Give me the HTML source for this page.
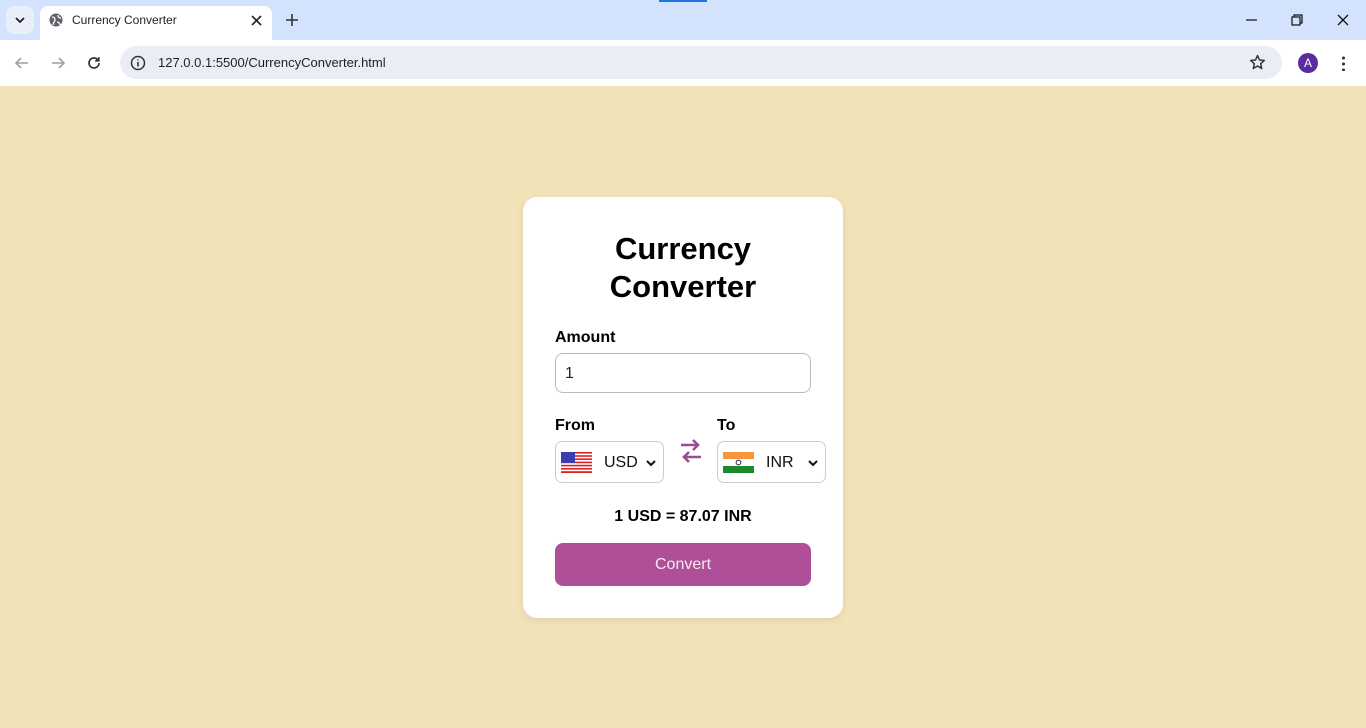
<!DOCTYPE html>
<html><head><meta charset="utf-8"><style>
*{box-sizing:border-box;margin:0;padding:0}
body{width:1366px;height:728px;overflow:hidden;font-family:"Liberation Sans",Arial,sans-serif;background:#f1e2b8;position:relative}
.top{position:absolute;left:0;top:0;width:1366px;height:40px;background:#d3e3fd}
.tab{position:absolute;left:40px;top:6px;width:232px;height:34px;background:#fff;border-radius:8px 8px 0 0}
.tab span{position:absolute;left:32px;top:7px;font-size:12px;color:#1f1f1f}
.bar{position:absolute;left:0;top:40px;width:1366px;height:46px;background:#fff}
.url{position:absolute;left:120px;top:6px;width:1162px;height:33px;background:#e9eef6;border-radius:17px}
.url span{position:absolute;left:38px;top:9px;font-size:13px;color:#1f1f1f}
.card{position:absolute;left:523px;top:197px;width:320px;height:421px;background:#fff;border-radius:14px;box-shadow:0 2px 8px rgba(0,0,0,.08)}
h1{position:absolute;left:0;top:33px;width:320px;text-align:center;font-size:31px;line-height:38px;font-weight:bold;color:#000}
.lbl{position:absolute;font-size:16px;font-weight:bold;color:#000}
.inp{position:absolute;left:32px;top:156px;width:256px;height:40px;border:1px solid #bbb;border-radius:8px;font-size:16px;padding:11px 9px;color:#222}
.sel{position:absolute;top:244px;width:109px;height:42px;border:1px solid #ccc;border-radius:7px}
.sel .c{position:absolute;top:12px;font-size:16px;color:#111}
.res{position:absolute;left:0;top:311px;width:320px;text-align:center;font-size:16px;font-weight:bold;color:#000}
.btn{position:absolute;left:32px;top:346px;width:256px;height:43px;background:#af4f97;border-radius:8px;color:#f6eaf3;font-size:16px;text-align:center;line-height:43px}
</style></head><body>
<div class="top">
<div style="position:absolute;left:6px;top:6px;width:28px;height:28px;background:#e9eef8;border-radius:8px"></div>
<svg style="position:absolute;left:14px;top:16px" width="12" height="8"><path d="M2 2l4 4 4-4" stroke="#1f1f1f" stroke-width="1.8" fill="none"/></svg>
<div class="tab"><svg style="position:absolute;left:9px;top:7px" width="14" height="14"><circle cx="7" cy="7" r="6.5" fill="#5f6368"/><path d="M3 4c2 0 3 1 3 3s-2 2-2 5M9 2c0 2 1 3 3 3M8 9c1 0 3 1 3 3" stroke="#fff" stroke-width="1.3" fill="none"/></svg><span>Currency Converter</span>
<svg style="position:absolute;left:211px;top:9px" width="11" height="11"><path d="M1 1l9 9M10 1l-9 9" stroke="#1f1f1f" stroke-width="1.6"/></svg></div>
<svg style="position:absolute;left:285px;top:13px" width="14" height="14"><path d="M7 1v12M1 7h12" stroke="#333" stroke-width="1.6"/></svg>
<div style="position:absolute;left:659px;top:0;width:48px;height:2px;background:#1a73e8"></div>
<svg style="position:absolute;left:1246px;top:19px" width="11" height="2"><path d="M0 1h11" stroke="#111" stroke-width="1.2"/></svg>
<svg style="position:absolute;left:1291px;top:14px" width="12" height="12"><rect x="1" y="3" width="8" height="8" fill="none" stroke="#111" stroke-width="1.2"/><path d="M3 3V1h8v8H9" fill="none" stroke="#111" stroke-width="1.2"/></svg>
<svg style="position:absolute;left:1337px;top:14px" width="12" height="12"><path d="M1 1l10 10M11 1L1 11" stroke="#111" stroke-width="1.3"/></svg>
</div>
<div class="bar">
<svg style="position:absolute;left:14px;top:15px" width="16" height="16"><path d="M14 8H2M7 3L2 8l5 5" stroke="#9aa0a6" stroke-width="1.6" fill="none"/></svg>
<svg style="position:absolute;left:50px;top:15px" width="16" height="16"><path d="M2 8h12M9 3l5 5-5 5" stroke="#9aa0a6" stroke-width="1.6" fill="none"/></svg>
<svg style="position:absolute;left:86px;top:15px" width="16" height="16"><path d="M13 8a5 5 0 1 1-1.5-3.6" stroke="#333" stroke-width="1.7" fill="none"/><path d="M13 2v4H9" fill="#333" stroke="#333" stroke-width="1.2"/></svg>
<div class="url"><svg style="position:absolute;left:10px;top:9px" width="16" height="16"><circle cx="8" cy="8" r="6.5" fill="none" stroke="#333" stroke-width="1.5"/><path d="M8 7v4.5M8 4.5v1" stroke="#333" stroke-width="1.6"/></svg><span>127.0.0.1:5500/CurrencyConverter.html</span>
<svg style="position:absolute;left:1129px;top:8px" width="17" height="17"><path d="M8.5 1.5l2 4.5 4.8.5-3.6 3.2 1 4.8-4.2-2.5-4.2 2.5 1-4.8L1.7 6.5l4.8-.5z" fill="none" stroke="#333" stroke-width="1.5" stroke-linejoin="round"/></svg></div>
<div style="position:absolute;left:1298px;top:13px;width:20px;height:20px;border-radius:50%;background:#5a2ca0;color:#fff;font-size:12px;text-align:center;line-height:20px">A</div>
<div style="position:absolute;left:1342px;top:15px;width:3px;height:16px;background:radial-gradient(circle,#333 1.4px,transparent 1.6px) 0 0/3px 6px"></div>
</div>
<div class="card">
<h1>Currency<br>Converter</h1>
<div class="lbl" style="left:32px;top:132px">Amount</div>
<div class="inp">1</div>
<div class="lbl" style="left:32px;top:220px">From</div>
<div class="lbl" style="left:194px;top:220px">To</div>
<div class="sel" style="left:32px">
<svg style="position:absolute;left:5px;top:10px" width="31" height="21"><rect width="31" height="21" fill="#fff"/><g fill="#d22">
<rect y="0" width="31" height="1.6"/><rect y="3.2" width="31" height="1.6"/><rect y="6.4" width="31" height="1.6"/><rect y="9.6" width="31" height="1.6"/><rect y="12.8" width="31" height="1.6"/><rect y="16" width="31" height="1.6"/><rect y="19.2" width="31" height="1.8"/></g><rect width="14" height="11" fill="#3c3bb0"/></svg>
<span class="c" style="left:48px">USD</span>
<svg style="position:absolute;left:90px;top:18px" width="10" height="7"><path d="M1 1l4 4 4-4" stroke="#111" stroke-width="2" fill="none"/></svg></div>
<svg style="position:absolute;left:155px;top:241px" width="26" height="26"><path d="M3 7h18M15 2l5 5-5 5" stroke="#9c4d8f" stroke-width="2.6" fill="none"/><path d="M23 19H5M11 14l-5 5 5 5" stroke="#9c4d8f" stroke-width="2.6" fill="none"/></svg>
<div class="sel" style="left:194px">
<svg style="position:absolute;left:5px;top:10px" width="31" height="21"><rect width="31" height="7" fill="#f7953a"/><rect y="7" width="31" height="7" fill="#fff"/><rect y="14" width="31" height="7" fill="#1a8a2a"/><circle cx="15.5" cy="10.5" r="2.4" fill="none" stroke="#225" stroke-width="1"/></svg>
<span class="c" style="left:48px">INR</span>
<svg style="position:absolute;left:90px;top:18px" width="10" height="7"><path d="M1 1l4 4 4-4" stroke="#111" stroke-width="2" fill="none"/></svg></div>
<div class="res">1 USD = 87.07 INR</div>
<div class="btn">Convert</div>
</div>
</body></html>
